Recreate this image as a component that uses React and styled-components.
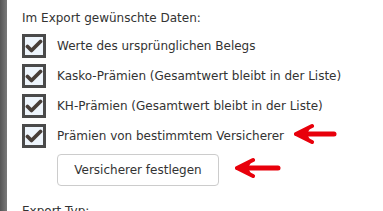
import React from "react";
import styled, { createGlobalStyle } from "styled-components";

const GlobalStyle = createGlobalStyle`
  html, body {
    margin: 0;
    padding: 0;
    background: #ffffff;
    overflow: hidden;
  }
`;

const Page = styled.div`
  display: flex;
  width: 383px;
  height: 211px;
  overflow: hidden;
  font-family: "DejaVu Sans", Verdana, sans-serif;
  font-size: 12px;
  color: #333333;
`;

const Strip = styled.div`
  width: 7px;
  flex-shrink: 0;
  background: linear-gradient(to right, #555555, #7a7a7a);
`;

const Content = styled.div`
  position: relative;
  flex: 1;
  padding: 8px 0 0 15px;
  display: flex;
  flex-direction: column;
  & > * {
    flex-shrink: 0;
  }
`;

const Heading = styled.div`
  height: 20px;
  line-height: 20px;
  margin-bottom: 6px;
`;

const Row = styled.div`
  display: flex;
  align-items: center;
  gap: 11px;
  height: 24px;
  margin-bottom: 6px;
`;

const Box = styled.div`
  width: 24px;
  height: 24px;
  box-sizing: border-box;
  border: 3px solid #4a4a4a;
  background: #eef5fc;
  display: flex;
  align-items: center;
  justify-content: center;
`;

const Label = styled.span`
  white-space: nowrap;
`;

const Button = styled.button`
  margin-left: 35px;
  width: 162px;
  height: 32px;
  box-sizing: border-box;
  border: 1px solid #cccccc;
  border-radius: 4px;
  background: #ffffff;
  font-family: inherit;
  font-size: 12px;
  color: #333333;
  padding: 0;
  align-self: flex-start;
`;

const Section = styled.div`
  margin-top: 17px;
  line-height: 16px;
`;

const Arrow = styled.svg`
  position: absolute;
  left: ${({ $x }) => $x}px;
  top: ${({ $y }) => $y}px;
`;

const Check = () => (
  <svg width="18" height="18" viewBox="0 0 18 18">
    <path
      d="M2.5 9.5 L6.5 13.5 L15.5 4.5"
      fill="none"
      stroke="#473e38"
      strokeWidth="3.8"
      strokeLinecap="round"
      strokeLinejoin="round"
    />
  </svg>
);

const RedArrow = ({ x, y, w }) => (
  <Arrow $x={x} $y={y} width={w} height="22" viewBox={`0 0 ${w} 22`}>
    <path
      d={`M${w - 3} 11 L10 11`}
      stroke="#e8000b"
      strokeWidth="5"
      strokeLinecap="round"
    />
    <path
      d="M2 11 L18 3 M2 11 L18 19"
      stroke="#e8000b"
      strokeWidth="4"
      strokeLinecap="round"
    />
    <path d="M2 11 L17 3.5 L13 11 L17 18.5 Z" fill="#e8000b" />
  </Arrow>
);

const items = [
  "Werte des ursprünglichen Belegs",
  "Kasko-Prämien (Gesamtwert bleibt in der Liste)",
  "KH-Prämien (Gesamtwert bleibt in der Liste)",
  "Prämien von bestimmtem Versicherer",
];

export default function App() {
  return (
    <>
      <GlobalStyle />
      <Page>
        <Strip />
        <Content>
          <Heading>Im Export gewünschte Daten:</Heading>
          {items.map((t) => (
            <Row key={t}>
              <Box>
                <Check />
              </Box>
              <Label>{t}</Label>
            </Row>
          ))}
          <Button>Versicherer festlegen</Button>
          <Section>Export Typ:</Section>
          <RedArrow x={287} y={123} w={43} />
          <RedArrow x={228} y={157} w={46} />
        </Content>
      </Page>
    </>
  );
}
